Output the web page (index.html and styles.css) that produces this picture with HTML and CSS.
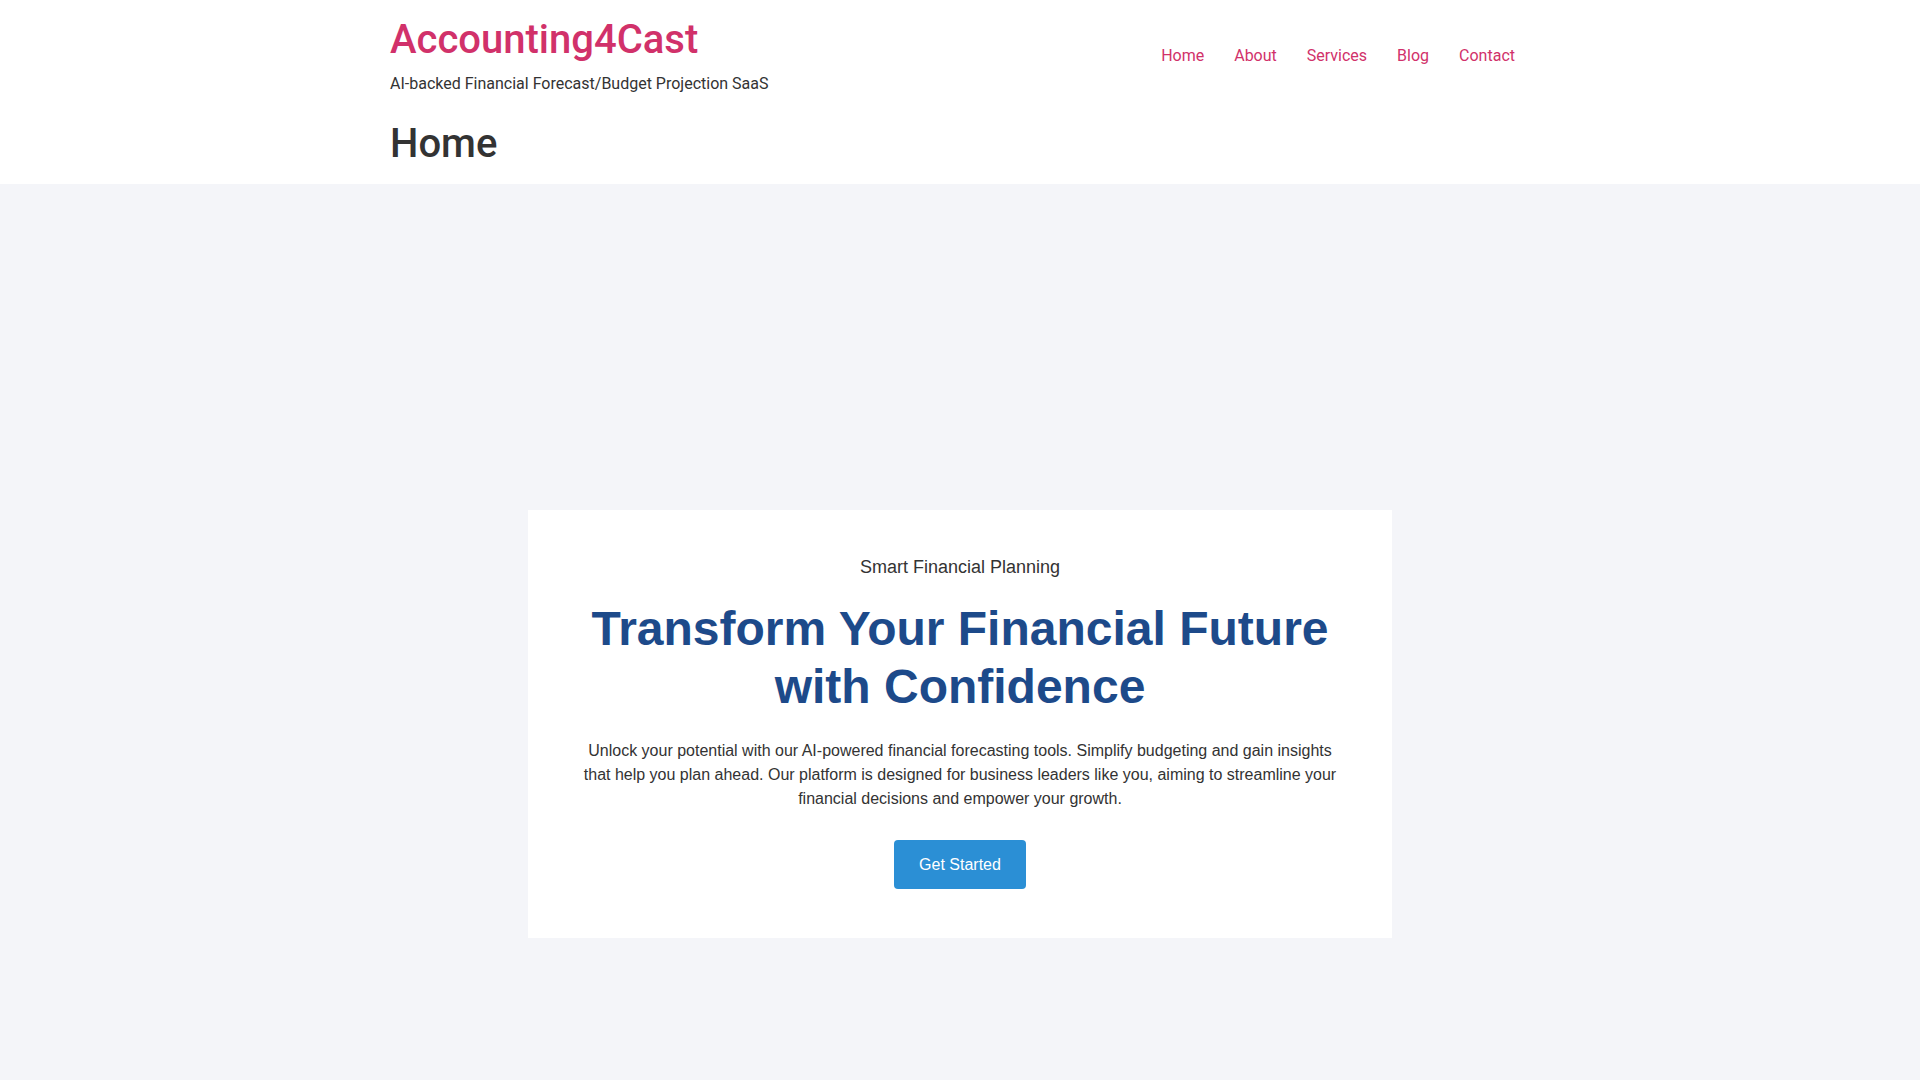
FILE: index.html
```html
<!DOCTYPE html>
<html lang="en">
<head>
<meta charset="utf-8">
<title>Home – Accounting4Cast</title>
<link rel="stylesheet" href="styles.css">
</head>
<body>
<header class="site-header">
  <div class="container header-row">
    <div class="branding">
      <p class="site-title"><a href="#">Accounting4Cast</a></p>
      <p class="site-description">AI-backed Financial Forecast/Budget Projection SaaS</p>
    </div>
    <nav class="main-nav">
      <a href="#">Home</a>
      <a href="#">About</a>
      <a href="#">Services</a>
      <a href="#">Blog</a>
      <a href="#">Contact</a>
    </nav>
  </div>
  <div class="container page-head">
    <h1 class="page-title">Home</h1>
  </div>
</header>
<main class="hero">
  <section class="hero-card">
    <p class="hero-kicker">Smart Financial Planning</p>
    <h2 class="hero-title">Transform Your Financial Future with Confidence</h2>
    <p class="hero-text">Unlock your potential with our AI-powered financial forecasting tools. Simplify budgeting and gain insights that help you plan ahead. Our platform is designed for business leaders like you, aiming to streamline your financial decisions and empower your growth.</p>
    <a class="btn" href="#">Get Started</a>
  </section>
</main>
</body>
</html>
```

FILE: styles.css
```css
* { box-sizing: border-box; }
html, body { margin: 0; padding: 0; }
body {
  font-family: Roboto, "Liberation Sans", Arial, sans-serif;
  background: #f4f5f9;
  color: #333;
}
a { text-decoration: none; }

.site-header {
  background: #ffffff;
  padding-top: 16px;
}
.container {
  width: 1140px;
  margin: 0 auto;
}
.header-row {
  display: flex;
  align-items: center;
  justify-content: space-between;
}
.site-title {
  margin: 0;
  font-size: 40px;
  font-weight: 500;
  line-height: 48px;
}
.site-title a { color: #d1316a; }
.site-description {
  margin: 8px 0 0;
  font-size: 16px;
  line-height: 24px;
  color: #333;
}
.main-nav {
  display: flex;
}
.main-nav a {
  color: #d1316a;
  font-size: 16px;
  line-height: 24px;
  padding: 0 15px;
}
.page-head {
  padding: 24px 0 16px;
}
.page-title {
  margin: 0;
  font-size: 40px;
  font-weight: 500;
  line-height: 48px;
  color: #333;
}

.hero {
  min-height: 100vh;
  display: flex;
  align-items: center;
  justify-content: center;
  font-family: "Liberation Sans", Arial, sans-serif;
}
.hero-card {
  width: 864px;
  background: #ffffff;
  padding: 47px 48px 49px;
  text-align: center;
}
.hero-kicker {
  margin: 0 0 22px;
  font-size: 18px;
  line-height: 21px;
  color: #333;
}
.hero-title {
  margin: 0 0 23px;
  font-size: 48px;
  line-height: 58px;
  font-weight: 700;
  color: #1d4a8a;
}
.hero-text {
  margin: 0 0 29px;
  font-size: 16px;
  line-height: 24px;
  color: #333;
}
.btn {
  display: inline-block;
  background: #2b8fd5;
  color: #ffffff;
  font-size: 16px;
  line-height: 25px;
  padding: 12px 25px;
  border-radius: 4px;
}
```
